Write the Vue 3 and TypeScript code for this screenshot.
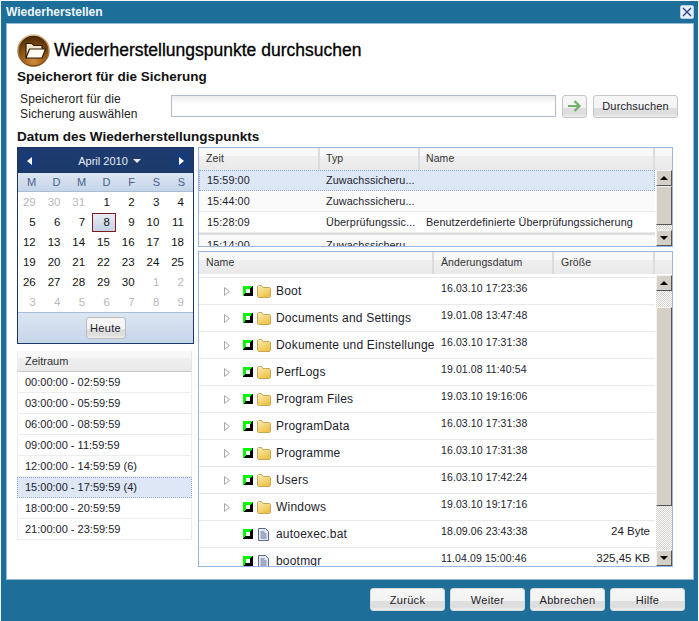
<script setup lang="ts">
const calendar: { day: number; muted?: boolean; today?: boolean }[][] = [
  [{ day: 29, muted: true }, { day: 30, muted: true }, { day: 31, muted: true }, { day: 1 }, { day: 2 }, { day: 3 }, { day: 4 }],
  [{ day: 5 }, { day: 6 }, { day: 7 }, { day: 8, today: true }, { day: 9 }, { day: 10 }, { day: 11 }],
  [{ day: 12 }, { day: 13 }, { day: 14 }, { day: 15 }, { day: 16 }, { day: 17 }, { day: 18 }],
  [{ day: 19 }, { day: 20 }, { day: 21 }, { day: 22 }, { day: 23 }, { day: 24 }, { day: 25 }],
  [{ day: 26 }, { day: 27 }, { day: 28 }, { day: 29 }, { day: 30 }, { day: 1, muted: true }, { day: 2, muted: true }],
  [{ day: 3, muted: true }, { day: 4, muted: true }, { day: 5, muted: true }, { day: 6, muted: true }, { day: 7, muted: true }, { day: 8, muted: true }, { day: 9, muted: true }],
]
const weekdays = ['M', 'D', 'M', 'D', 'F', 'S', 'S']

const ranges = [
  '00:00:00 - 02:59:59',
  '03:00:00 - 05:59:59',
  '06:00:00 - 08:59:59',
  '09:00:00 - 11:59:59',
  '12:00:00 - 14:59:59 (6)',
  '15:00:00 - 17:59:59 (4)',
  '18:00:00 - 20:59:59',
  '21:00:00 - 23:59:59',
]

const points = [
  { time: '15:59:00', type: 'Zuwachssicheru...', name: '' },
  { time: '15:44:00', type: 'Zuwachssicheru...', name: '' },
  { time: '15:28:09', type: 'Überprüfungssic...', name: 'Benutzerdefinierte Überprüfungssicherung' },
  { time: '15:14:00', type: 'Zuwachssicheru...', name: '' },
]

const files = [
  { name: 'Boot', date: '16.03.10 17:23:36', size: '', folder: true },
  { name: 'Documents and Settings', date: '19.01.08 13:47:48', size: '', folder: true },
  { name: 'Dokumente und Einstellungen', date: '16.03.10 17:31:38', size: '', folder: true },
  { name: 'PerfLogs', date: '19.01.08 11:40:54', size: '', folder: true },
  { name: 'Program Files', date: '19.03.10 19:16:06', size: '', folder: true },
  { name: 'ProgramData', date: '16.03.10 17:31:38', size: '', folder: true },
  { name: 'Programme', date: '16.03.10 17:31:38', size: '', folder: true },
  { name: 'Users', date: '16.03.10 17:42:24', size: '', folder: true },
  { name: 'Windows', date: '19.03.10 19:17:16', size: '', folder: true },
  { name: 'autoexec.bat', date: '18.09.06 23:43:38', size: '24 Byte', folder: false },
  { name: 'bootmgr', date: '11.04.09 15:00:46', size: '325,45 KB', folder: false },
]
</script>

<template>
  <div class="window">
    <div class="titlebar">
      <span class="title">Wiederherstellen</span>
      <button class="close">
        <svg width="10" height="10" viewBox="0 0 10 10"><path d="M1 1l8 8M9 1l-8 8" stroke="#27407e" stroke-width="1.3" fill="none" /></svg>
      </button>
    </div>

    <div class="client">
      <div class="heading">
        <svg class="heading-icon" width="33" height="33" viewBox="0 0 33 33">
          <defs>
            <radialGradient id="orb" cx="50%" cy="85%" r="80%">
              <stop offset="0" stop-color="#d08c3c" />
              <stop offset="0.55" stop-color="#8f5514" />
              <stop offset="1" stop-color="#4a2805" />
            </radialGradient>
            <linearGradient id="rim" x1="0" y1="0" x2="0" y2="1">
              <stop offset="0" stop-color="#e2c193" />
              <stop offset="1" stop-color="#7a4a12" />
            </linearGradient>
            <linearGradient id="fold" x1="0" y1="0" x2="0.6" y2="1">
              <stop offset="0" stop-color="#fdf0bb" />
              <stop offset="1" stop-color="#eec244" />
            </linearGradient>
          </defs>
          <circle cx="16.5" cy="16.5" r="15.5" fill="url(#orb)" stroke="url(#rim)" stroke-width="1.5" />
          <path d="M9 24V9.5h6l2 2h8v3" fill="#f3e6cf" stroke="#2e1a05" stroke-width="1.2" />
          <path d="M9 24l3.5-9h16L25 24z" fill="#fffdf6" stroke="#2e1a05" stroke-width="1.2" />
        </svg>
        <h1>Wiederherstellungspunkte durchsuchen</h1>
      </div>

      <h2 class="section-one">Speicherort für die Sicherung</h2>
      <div class="location">
        <label>Speicherort für die<br />Sicherung auswählen</label>
        <input class="path" type="text" />
        <button class="btn go">
          <svg width="14" height="12" viewBox="0 0 14 12"><path d="M0 6h11M6.5 1l5 5-5 5" stroke="#72b16a" stroke-width="2.2" fill="none" /></svg>
        </button>
        <button class="btn browse">Durchsuchen</button>
      </div>

      <h2 class="section-two">Datum des Wiederherstellungspunkts</h2>
      <div class="columns">
        <div class="left">
          <div class="cal">
            <div class="cal-head">
              <span class="cal-nav"><i class="tri-left" /></span>
              <span class="cal-month">April 2010<i class="tri-down" /></span>
              <span class="cal-nav"><i class="tri-right" /></span>
            </div>
            <div class="cal-week">
              <span v-for="(w, i) in weekdays" :key="i">{{ w }}</span>
            </div>
            <div class="cal-body">
              <div v-for="(row, r) in calendar" :key="r" class="cal-row">
                <span
                  v-for="(c, i) in row"
                  :key="i"
                  class="cal-day"
                  :class="{ muted: c.muted, today: c.today }"
                >{{ c.day }}</span>
              </div>
            </div>
            <div class="cal-foot"><button class="btn heute">Heute</button></div>
          </div>

          <div class="ranges">
            <div class="grid-head range-head">Zeitraum</div>
            <div
              v-for="r in ranges"
              :key="r"
              class="range"
              :class="{ selected: r.startsWith('15:') }"
            >{{ r }}</div>
          </div>
        </div>

        <div class="right">
          <div class="grid points">
            <div class="grid-head points-head">
              <span class="col-time">Zeit</span>
              <span class="col-type">Typ</span>
              <span class="col-name">Name</span>
              <span class="col-end" />
            </div>
            <div class="grid-body">
              <div class="rows">
                <div
                  v-for="(p, i) in points"
                  :key="p.time"
                  class="point"
                  :class="{ selected: i === 0, alt: i % 2 === 1, lined: i === 3 }"
                >
                  <span class="col-time">{{ p.time }}</span>
                  <span class="col-type">{{ p.type }}</span>
                  <span class="col-name">{{ p.name }}</span>
                </div>
              </div>
              <div class="scrollbar">
                <span class="arrow"><i class="tri-up-s" /></span>
                <span class="thumb top-thumb" />
                <span class="track" />
                <span class="arrow"><i class="tri-down-s" /></span>
              </div>
            </div>
          </div>

          <div class="grid files">
            <div class="grid-head files-head">
              <span class="col-file">Name</span>
              <span class="col-date">Änderungsdatum</span>
              <span class="col-size">Größe</span>
              <span class="col-end" />
            </div>
            <div class="grid-body">
              <div class="rows">
                <div v-for="f in files" :key="f.name" class="file">
                  <div class="col-file file-cell">
                    <svg v-if="f.folder" class="expander" width="6" height="9" viewBox="0 0 6 9"><path d="M.5.5l5 4-5 4z" fill="#fff" stroke="#a8a8a8" /></svg>
                    <span v-else class="expander" />
                    <span class="check"><i /></span>
                    <svg v-if="f.folder" class="type-icon" width="14" height="13" viewBox="0 0 14 13">
                      <path d="M.5 3V1.500l1-1h3l1.500 2h6.500l1 1v8l-1 1h-11l-1-1z" fill="url(#fold)" stroke="#c9a559" />
                    </svg>
                    <svg v-else class="type-icon" width="14" height="13" viewBox="0 0 14 13">
                      <path d="M1.500.5h7l3 3v9h-10z" fill="#e7eaf3" stroke="#5a6a96" />
                      <path d="M3.500 4h4M3.500 6h6M3.500 8h6M3.500 10h6" stroke="#5a6a96" />
                    </svg>
                    <span class="file-name">{{ f.name }}</span>
                  </div>
                  <span class="col-date file-date">{{ f.date }}</span>
                  <span class="col-size file-size">{{ f.size }}</span>
                </div>
              </div>
              <div class="scrollbar">
                <span class="arrow"><i class="tri-up-s" /></span>
                <span class="track short" />
                <span class="thumb files-thumb" />
                <span class="track" />
                <span class="arrow"><i class="tri-down-s" /></span>
              </div>
            </div>
          </div>
        </div>
      </div>
    </div>

    <div class="footer">
      <button class="btn foot">Zurück</button>
      <button class="btn foot">Weiter</button>
      <button class="btn foot">Abbrechen</button>
      <button class="btn foot">Hilfe</button>
    </div>
  </div>
</template>

<style>
html,
body {
  margin: 0;
  background: #fff;
}
</style>

<style scoped>
.window {
  box-sizing: border-box;
  width: 699px;
  height: 621px;
  padding: 1px 1px 0 1px;
  background: #f4f6f8;
  display: flex;
  flex-direction: column;
  font-family: "Liberation Sans", Arial, sans-serif;
  font-size: 11px;
  color: #111;
}
.titlebar {
  background: #1d6f99;
  box-sizing: border-box;
  height: 22px;
  flex: none;
  display: flex;
  align-items: center;
  justify-content: space-between;
  padding: 0 4px 1px 5px;
}
.title {
  color: #f0f6fa;
  font-weight: bold;
  font-size: 12px;
}
.close {
  width: 14px;
  height: 14px;
  padding: 0;
  border: 1px solid #b5cbe6;
  border-radius: 2px;
  background: #e5eefa;
  display: flex;
  align-items: center;
  justify-content: center;
}
.client {
  box-sizing: border-box;
  flex: none;
  height: 557px;
  background: #fff;
  border: 1px solid #97b7d8;
  padding: 9px 15px 0 10px;
  box-shadow: -5px 0 0 #1d6f99, 4px 0 0 #1d6f99;
  margin: 0 4px 0 5px;
}
.heading {
  display: flex;
  align-items: center;
  gap: 4px;
  height: 34px;
}
.heading-icon {
  flex: none;
}
h1 {
  margin: 0;
  font-size: 17.5px;
  font-weight: normal;
  color: #000;
  -webkit-text-stroke: 0.3px #000;
}
h2 {
  margin: 0;
  font-size: 13.5px;
  font-weight: bold;
  color: #111;
  line-height: 15px;
}
.section-one {
  margin-top: 2px;
}
.location {
  display: flex;
  align-items: center;
  margin-top: 5px;
  height: 34px;
}
.location label {
  width: 154px;
  margin-top: 1px;
  padding-left: 3px;
  line-height: 15px;
  font-size: 12px;
  color: #222;
  box-sizing: border-box;
  flex: none;
  letter-spacing: 0.15px;
}
.path {
  box-sizing: border-box;
  width: 385px;
  height: 22px;
  padding: 0;
  border: 1px solid #b3bbd3;
  background: linear-gradient(#ececec, #fff 8px);
  margin-right: 6px;
}
.btn {
  box-sizing: border-box;
  padding: 0;
  border: 1px solid #c6c6c6;
  border-radius: 3px;
  background: linear-gradient(#f6f6f6 0, #f4f4f4 55%, #dedede 55%, #dedede 85%, #efefef 100%);
  font-family: inherit;
  font-size: 11px;
  color: #1c1c2c;
  letter-spacing: 0.3px;
}
.go {
  width: 25px;
  height: 23px;
  margin-right: 6px;
  display: flex;
  align-items: center;
  justify-content: center;
}
.browse {
  width: 85px;
  height: 23px;
  letter-spacing: 0.15px;
}
.section-two {
  margin-top: 6px;
}
.columns {
  display: flex;
  gap: 4px;
  margin-top: 3px;
}
.left {
  width: 177px;
  flex: none;
}
.right {
  width: 475px;
  flex: none;
}
.cal {
  border: 1px solid #1a3767;
  background: #fff;
}
.cal-head {
  height: 25px;
  display: flex;
  align-items: center;
  justify-content: space-between;
  padding: 0 5px;
  background: linear-gradient(#1f3c72, #1a3868);
  color: #e8eef8;
  font-size: 11px;
}
.cal-nav {
  width: 13px;
  height: 15px;
  background: #173a78;
  display: flex;
  align-items: center;
  justify-content: center;
}
.cal-month {
  display: flex;
  align-items: center;
  gap: 5px;
  margin-left: 8px;
}
.tri-left,
.tri-right,
.tri-down,
.tri-up-s,
.tri-down-s {
  display: block;
  width: 0;
  height: 0;
}
.tri-left {
  border: 4px solid transparent;
  border-right: 5px solid #fff;
  border-left: 0;
}
.tri-right {
  border: 4px solid transparent;
  border-left: 5px solid #fff;
  border-right: 0;
}
.tri-down {
  border: 4px solid transparent;
  border-top: 4px solid #e8eef8;
  border-bottom: 0;
}
.cal-week {
  box-sizing: border-box;
  height: 19px;
  display: grid;
  grid-template-columns: repeat(7, 25px);
  align-items: center;
  text-align: center;
  padding-left: 1px;
  color: #4a5f8a;
  font-size: 11px;
  background: linear-gradient(#dce6f2, #c5d5e9);
  border-bottom: 1px solid #a9bdd5;
}
.cal-body {
  padding: 0 2px 0 0;
}
.cal-row {
  display: grid;
  grid-template-columns: repeat(7, 1fr);
  height: 20px;
  align-items: center;
}
.cal-day {
  box-sizing: border-box;
  height: 19px;
  display: flex;
  align-items: center;
  justify-content: flex-end;
  padding-right: 6px;
  margin-right: 1px;
  font-size: 11.5px;
  color: #111;
}
.cal-day.muted {
  color: #b9b9b9;
}
.cal-day.today {
  border: 1px solid #7a1a1a;
  background: linear-gradient(#e5ecf6, #c3d2e6);
  padding-right: 5px;
}
.cal-foot {
  box-sizing: border-box;
  height: 31px;
  display: flex;
  align-items: center;
  justify-content: center;
  background: linear-gradient(#dbe5f1, #c6d6ea);
  border-top: 1px solid #a9bdd5;
}
.heute {
  width: 40px;
  height: 22px;
  border-color: #bcbcbc;
  font-size: 11px;
}
.grid-head {
  background: linear-gradient(#f8f8f8 0, #f8f8f8 35%, #efefef 35%, #e9e9ea 100%);
  color: #333;
}
.ranges {
  margin-top: 7px;
  margin-right: 2px;
}
.range-head {
  box-sizing: border-box;
  height: 21px;
  line-height: 20px;
  padding-left: 7px;
  border-bottom: 1px solid #c8c8c8;
  border-right: 1px solid #e6e6e6;
  border-left: 1px solid #eee;
  font-size: 11px;
}
.range {
  box-sizing: border-box;
  height: 21px;
  line-height: 21px;
  padding-left: 7px;
  border: 1px solid #ededed;
  border-top: 0;
  font-size: 11px;
  color: #1a1a2a;
}
.range.selected,
.point.selected {
  background: #dde7f6;
  outline: 1px dotted #8fa9d5;
  outline-offset: -1px;
}
.grid {
  box-sizing: border-box;
  border: 1px solid #97b7df;
  overflow: hidden;
  background: #fff;
}
.points {
  height: 100px;
}
.files {
  height: 316px;
  margin-top: 4px;
}
.points-head,
.files-head {
  display: flex;
  height: 22px;
  align-items: center;
  font-size: 10.5px;
  letter-spacing: 0.1px;
}
.points-head span,
.files-head span {
  box-sizing: border-box;
  height: 100%;
  line-height: 21px;
  padding-left: 6px;
  border-right: 2px solid #dcdcdc;
  flex: none;
}
.points-head .col-time,
.files-head .col-file,
.files-head .col-date,
.files-head .col-size {
  padding-left: 7px;
}
.col-time {
  width: 121px;
  flex: none;
}
.col-type {
  width: 100px;
  flex: none;
}
.col-name {
  width: 234.5px;
  flex: none;
}
.col-end {
  flex: 1 !important;
  border-right: 0 !important;
}
.col-file {
  width: 235px;
  flex: none;
}
.col-date {
  width: 120px;
  flex: none;
}
.col-size {
  width: 101px;
  flex: none;
}
.grid-body {
  display: flex;
}
.rows {
  width: 456px;
  flex: none;
  overflow: hidden;
}
.point {
  box-sizing: border-box;
  display: flex;
  height: 21px;
  line-height: 20px;
  border-bottom: 1px solid #e9e9e9;
  font-size: 10.8px;
  color: #1c1c2c;
  letter-spacing: 0.1px;
  background: #fff;
}
.point.alt {
  background: #fafafa;
}
.point.lined {
  border-top: 2px solid #ddd;
}
.point span {
  padding-left: 6px;
  white-space: nowrap;
  box-sizing: border-box;
}
.point .col-time {
  padding-left: 8px;
}
.scrollbar {
  width: 17px;
  margin-left: 1px;
  display: flex;
  flex-direction: column;
  flex: none;
}
.points .scrollbar {
  height: 76px;
}
.files .scrollbar {
  height: 291px;
  margin-top: 1px;
}
.arrow,
.thumb {
  box-sizing: border-box;
  display: flex;
  align-items: center;
  justify-content: center;
  flex: none;
  width: 16px;
  background: #d4d0c8;
  border: 1px solid;
  border-color: #f4f2ee #555 #555 #f4f2ee;
}
.arrow {
  height: 16px;
}
.top-thumb {
  height: 39px;
}
.files-thumb {
  height: 199px;
}
.track {
  flex: 1;
  width: 16px;
  background: repeating-conic-gradient(#d4d0c8 0 25%, #fff 0 50%) 0 0 / 2px 2px;
}
.track.short {
  flex: none;
  height: 16px;
}
.tri-up-s {
  border: 4px solid transparent;
  border-bottom: 4px solid #000;
  border-top: 0;
}
.tri-down-s {
  border: 4px solid transparent;
  border-top: 4px solid #000;
  border-bottom: 0;
}
.file {
  box-sizing: border-box;
  display: flex;
  height: 27px;
  border-bottom: 1px solid #e9e9e9;
  font-size: 11px;
  color: #1c1c2c;
}
.file:first-child {
  height: 28px;
  border-top: 1px solid #e9e9e9;
  margin-top: 3px;
}
.file-cell {
  display: flex;
  align-items: center;
  overflow: hidden;
  padding-left: 25px;
  box-sizing: border-box;
}
.expander {
  width: 6px;
  flex: none;
  margin-right: 13px;
}
.check {
  box-sizing: border-box;
  flex: none;
  width: 10px;
  height: 10px;
  background: linear-gradient(135deg, #00f800 50%, #000 50%);
  display: flex;
  align-items: center;
  justify-content: center;
  margin-right: 4px;
}
.check i {
  display: block;
  width: 4px;
  height: 4px;
  background: #fff;
}
.type-icon {
  flex: none;
  margin-right: 5px;
}
.file-name {
  font-size: 12px;
  white-space: nowrap;
  letter-spacing: 0.2px;
}
.file-date {
  padding-top: 4px;
  padding-left: 7px;
  box-sizing: border-box;
  font-size: 10.5px;
  letter-spacing: 0.1px;
}
.file-size {
  padding-top: 4px;
  text-align: right;
  padding-right: 5px;
  box-sizing: border-box;
  font-size: 11.5px;
}
.footer {
  background: #1d6f99;
  flex: 1;
  display: flex;
  justify-content: flex-end;
  align-items: flex-start;
  gap: 5px;
  padding: 8px 13px 0 0;
}
.foot {
  width: 75px;
  height: 23px;
  border-color: #d8d8d8;
}
</style>
